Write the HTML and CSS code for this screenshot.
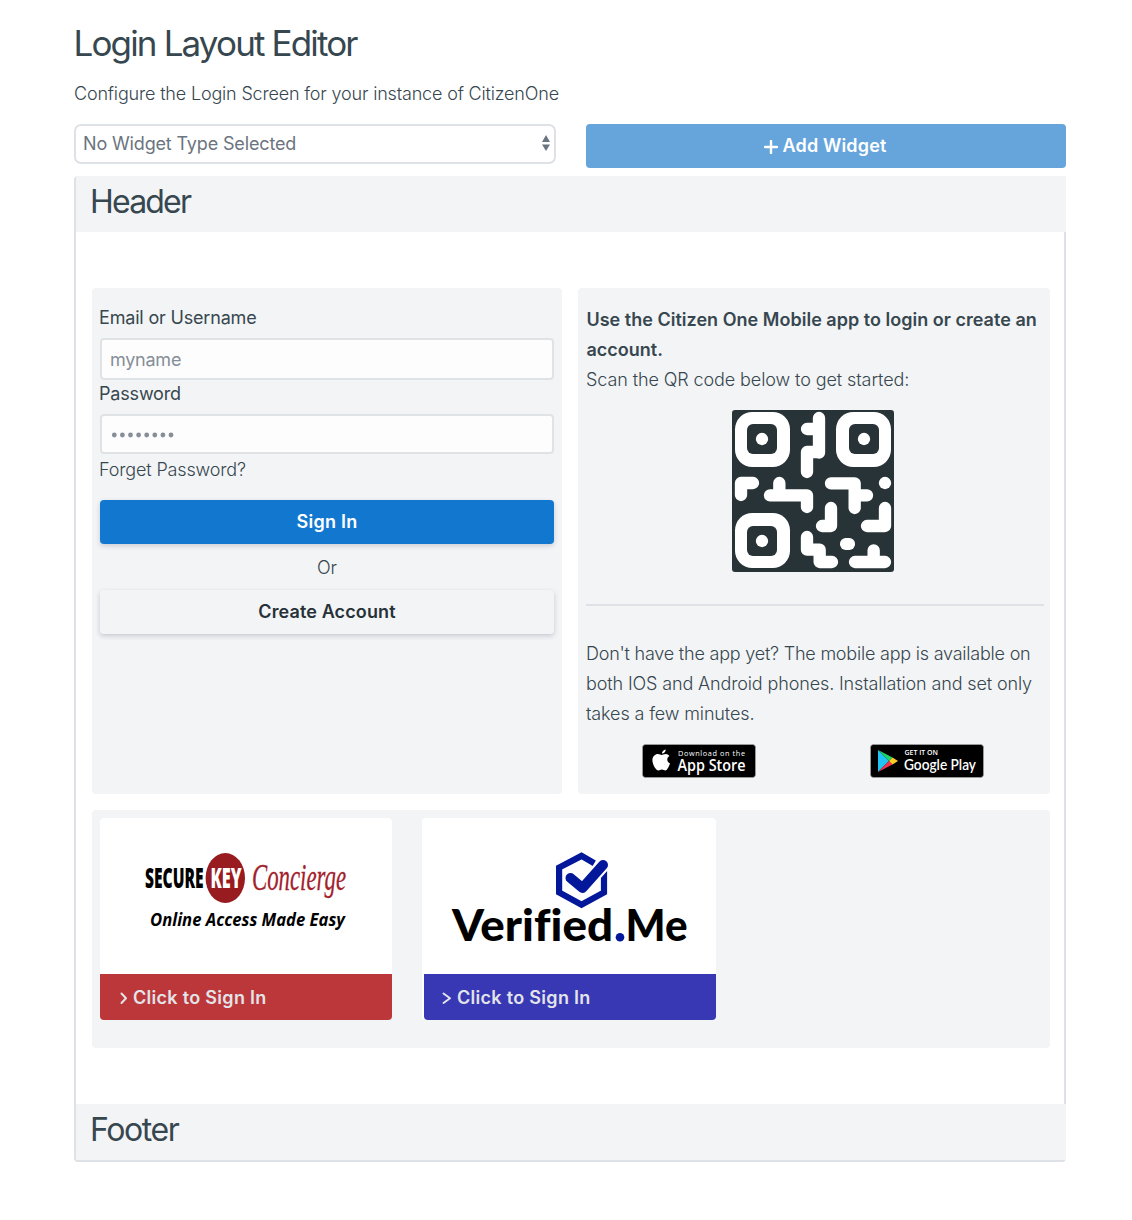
FILE: index.html
```html
<!DOCTYPE html>
<html lang="en">
<head>
<meta charset="utf-8">
<title>Login Layout Editor</title>
<link rel="stylesheet" href="styles.css">
</head>
<body>
<main class="page">
  <h1 class="title">Login Layout Editor</h1>
  <p class="intro">Configure the Login Screen for your instance of CitizenOne</p>
  <div class="toolbar">
    <div class="select"><span>No Widget Type Selected</span>
      <svg class="select-icon" viewBox="0 0 10 18" width="10" height="18"><path d="M5 1 9 8H1zM1 10.500h8L5 17z" fill="#6b7480"/></svg>
    </div>
    <button class="btn add"><svg viewBox="0 0 14 14" width="14" height="14"><path d="M7 1v12M1 7h12" stroke="#fff" stroke-width="2.400" stroke-linecap="round"/></svg><span>Add Widget</span></button>
  </div>
  <section class="editor">
    <header class="band"><h2 class="header-title">Header</h2></header>
    <div class="content">
      <form class="panel login">
        <label class="label">Email or Username</label>
        <div class="input"><span>myname</span></div>
        <label class="label">Password</label>
        <div class="input password"><svg viewBox="0 0 64 6" width="64" height="6"><g fill="#868e98"><circle cx="4.300" cy="3" r="2.400"/><circle cx="12.400" cy="3" r="2.400"/><circle cx="20.500" cy="3" r="2.400"/><circle cx="28.600" cy="3" r="2.400"/><circle cx="36.700" cy="3" r="2.400"/><circle cx="44.800" cy="3" r="2.400"/><circle cx="52.900" cy="3" r="2.400"/><circle cx="61" cy="3" r="2.400"/></g></svg></div>
        <a class="forgot">Forget Password?</a>
        <button class="btn primary" type="button">Sign In</button>
        <p class="or">Or</p>
        <button class="btn secondary" type="button">Create Account</button>
      </form>
      <div class="panel mobile">
        <p class="lead">Use the Citizen One Mobile app to login or create an<br>account.</p>
        <p class="scan">Scan the QR code below to get started:</p>
        <svg class="qr" viewBox="24 24 486 486" width="162" height="162">
          <rect x="24" y="24" width="486" height="486" rx="9" fill="#283337"/>
          <g fill="#fff"><rect x="33" y="30" width="165" height="165" rx="52"/><rect x="336" y="30" width="165" height="165" rx="52"/><rect x="33" y="333" width="165" height="165" rx="52"/></g>
          <g fill="#283337"><rect x="69" y="66" width="90" height="90" rx="18"/><rect x="375" y="66" width="90" height="90" rx="18"/><rect x="69" y="372" width="90" height="90" rx="18"/></g>
          <g fill="#fff"><circle cx="114" cy="111" r="18.500"/><circle cx="420" cy="111" r="18.500"/><circle cx="114" cy="417" r="18.500"/><circle cx="483" cy="243" r="18.500"/><rect x="348" y="408" width="45" height="36" rx="17"/></g>
          <path d="M285 48V152M249 81H285M285 150H249V210M51 279V243H87M166 243V280M138 280H249V315M321 244H392V318M392 280H429M321 318V372H294M483 318V372H429M249 405V443H287V480H324M393 480H483M449 445V480" fill="none" stroke="#fff" stroke-width="37" stroke-linecap="round" stroke-linejoin="round"/>
        </svg>
        <hr>
        <p class="availability"><span class="line-tight">Don't have the app yet? The mobile app is available on</span><br>both IOS and Android phones. Installation and set only<br>takes a few minutes.</p>
        <div class="stores">
          <svg viewBox="0 0 114 34" width="114" height="34">
            <rect x=".5" y=".5" width="113" height="33" rx="3" fill="#000" stroke="#a6a6a6" stroke-width=".7"/>
            <g transform="translate(-.5 .6)" fill="#fff"><path d="M24.200 4.800c.2 2-1.500 4.100-3.700 4.100-.3-2 1.600-3.900 3.700-4.100z"/><path d="M20.200 10.300c.9 0 2.200-1 4-1 1.500 0 2.900.8 3.700 2-3.200 1.900-2.600 6.200.6 7.500-.8 2.200-2.600 7-4.600 7-1.300 0-1.900-.9-3.500-.9s-2.200.9-3.500.9c-2.600 0-6-6-6-10.400 0-3.800 2.900-6.100 5.500-6.100 1.600 0 2.900 1 3.800 1z"/></g>
            <text class="store-small" x="36" y="11.500" textLength="67" lengthAdjust="spacing">Download on the</text>
            <text class="store-apple" x="35.500" y="27" textLength="68" lengthAdjust="spacingAndGlyphs">App Store</text>
          </svg>
          <svg viewBox="0 0 114 34" width="114" height="34">
            <rect x=".5" y=".5" width="113" height="33" rx="3" fill="#000" stroke="#a6a6a6" stroke-width=".7"/>
            <path d="M8 6v22l11-11z" fill="#20c4f4"/><path d="M8 6l11 11 3.500-3.500z" fill="#20d568"/><path d="M8 28l11-11 3.500 3.500z" fill="#f3324b"/><path d="M22.500 13.500 28 17l-5.500 3.500L19 17z" fill="#ffcc25"/>
            <text class="store-get" x="34.500" y="11" textLength="33.500" lengthAdjust="spacingAndGlyphs">GET IT ON</text>
            <text class="store-google" x="34" y="26" textLength="72" lengthAdjust="spacingAndGlyphs">Google Play</text>
          </svg>
        </div>
      </div>
      <div class="panel providers">
        <article class="provider">
          <svg viewBox="0 0 292 156" width="292" height="156">
            <ellipse cx="125.300" cy="60" rx="19.700" ry="25" fill="#981b20"/>
            <text class="sk-secure" x="45" y="69.500" textLength="58.500" lengthAdjust="spacingAndGlyphs">SECURE</text>
            <text class="sk-key" x="110.500" y="69.500" textLength="31" lengthAdjust="spacingAndGlyphs">KEY</text>
            <text class="sk-concierge" x="152" y="72" textLength="94" lengthAdjust="spacingAndGlyphs">Concierge</text>
            <text class="sk-tag" x="50" y="107.500" textLength="195" lengthAdjust="spacingAndGlyphs">Online Access Made Easy</text>
          </svg>
          <a class="signin red"><svg viewBox="0 0 10 14" width="10" height="14"><path d="M2.500 2.500 7 7.200 2.500 12" fill="none" stroke="#e2e4e9" stroke-width="2" stroke-linecap="round" stroke-linejoin="round"/></svg><span>Click to Sign In</span></a>
        </article>
        <article class="provider verified">
          <svg viewBox="0 0 294 156" width="294" height="156">
            <path d="M172.300 45.200 159.500 37.900 137.100 49.600V74.500L159.500 86.700 182 74.500V53" fill="none" stroke="#03179b" stroke-width="6.200"/>
            <path d="M148.500 60 160.500 70 181 47" fill="none" stroke="#fff" stroke-width="14" stroke-linecap="round" stroke-linejoin="round"/>
            <path d="M148.500 60 160.500 70 181 47" fill="none" stroke="#03179b" stroke-width="10" stroke-linecap="round" stroke-linejoin="round"/>
            <text class="vm" x="30" y="123" textLength="161" lengthAdjust="spacingAndGlyphs">Verified</text>
            <circle cx="198" cy="119.300" r="4.300" fill="#03179b"/>
            <text class="vm" x="203.500" y="123" textLength="62" lengthAdjust="spacingAndGlyphs">Me</text>
          </svg>
          <a class="signin blue"><svg viewBox="0 0 10 14" width="10" height="14"><path d="M1.500 2.500 8 7.200 1.500 12" fill="none" stroke="#e2e4e9" stroke-width="2" stroke-linecap="round" stroke-linejoin="round"/></svg><span>Click to Sign In</span></a>
        </article>
      </div>
    </div>
    <footer class="band"><h2 class="footer-title">Footer</h2></footer>
  </section>
</main>
</body>
</html>
```
FILE: styles.css
```css
* { box-sizing: border-box; }
body { margin: 0; background: #fff; color: #37474f; font: 300 18px/30px Inter, "Liberation Sans", sans-serif; }
h1, h2, p { margin: 0; }
svg { display: block; flex: none; }
.page { width: 992px; margin: 0 0 0 74px; padding-top: 20px; }
.title { margin-left: -.5px; font-size: 35px; line-height: 47px; font-weight: 420; letter-spacing: -1.85px; }
.intro { margin-top: 12px; letter-spacing: -.175px; }
.toolbar { display: flex; justify-content: space-between; align-items: flex-start; height: 52px; margin-top: 15px; }
.select { display: flex; align-items: center; justify-content: space-between; width: 482px; height: 40px; padding: 0 3px 0 7px; border: 2px solid #dee2e6; border-radius: 7px; color: #6b7480; font-weight: 400; letter-spacing: -.15px; }
.select-icon { margin-top: -2px; }
.btn { display: flex; align-items: center; justify-content: center; height: 44px; padding: 0; border: 0; border-radius: 4px; font: 600 18px/30px Inter, "Liberation Sans", sans-serif; letter-spacing: .25px; }
.add { width: 480px; padding-right: 2px; gap: 5px; background: #65a5dc; color: #fff; letter-spacing: .15px; }
.add svg { margin-top: 2px; }
.editor { border: 2px solid #dee2e6; border-top: 0; border-radius: 4px; }
.band { height: 56px; margin-right: -2px; padding: 5px 14px; background: #f3f4f6; }
.band h2 { font-size: 32px; line-height: 41px; font-weight: 420; }
.header-title { letter-spacing: -1.8px; }
.footer-title { letter-spacing: -1.4px; }
.content { display: grid; grid-template-columns: 470px 472px; grid-template-rows: 506px 238px; gap: 16px; padding: 56px 14px 56px 16px; }
.panel { border-radius: 4px; background: #f3f4f6; }
.login { display: flex; flex-direction: column; padding: 14px 8px; }
.label { height: 36px; margin-left: -1px; line-height: 32px; font-weight: 400; letter-spacing: -.18px; }
.input { display: flex; flex: none; align-items: center; height: 42px; margin-bottom: 4px; padding: 2px 8px 0; border: 2px solid #dfe3e6; border-radius: 4px; background: #fdfdfd; color: #868e98; font-weight: 400; letter-spacing: -.25px; }
.input.password { height: 40px; margin: 0; }
.login .label:nth-of-type(2) { margin-top: -6px; }
.forgot { margin: 1px 0 15px -1px; letter-spacing: -.15px; }
.primary { flex: none; background: #1278cf; color: #fff; box-shadow: 0 2px 5px rgba(40, 50, 80, .2); }
.or { height: 46px; line-height: 47px; text-align: center; }
.secondary { flex: none; background: #f3f4f6; color: #263238; box-shadow: 0 2px 5px rgba(40, 50, 80, .22); letter-spacing: .12px; }
.mobile { display: flex; flex-direction: column; padding: 17px 10px 16px 8px; white-space: nowrap; }
.lead { padding-left: .4px; font-weight: 600; letter-spacing: .02px; }
.scan { letter-spacing: -.1px; }
.qr { align-self: center; margin-top: 15px; }
hr { align-self: flex-start; width: 458px; height: 2px; margin: 32px 0 33px; border: 0; background: #dee2e6; }
.availability { letter-spacing: -.13px; }
.line-tight { letter-spacing: -.215px; }
.stores { display: flex; justify-content: space-between; margin-top: 15px; padding: 0 56px; }
.stores text { fill: #fff; }
.store-small { font: 500 7.3px "Open Sans", sans-serif; }
.store-apple { font: 600 16.5px "Open Sans", sans-serif; }
.store-get { font: 600 7px "Open Sans", sans-serif; }
.store-google { font: 600 15.5px Lato, sans-serif; }
.providers { grid-column: 1 / 3; display: flex; gap: 30px; padding: 8px; }
.provider { width: 292px; height: 202px; border-radius: 4px; background: #fff; }
.verified { width: 294px; }
.signin { display: flex; align-items: center; gap: 4px; height: 46px; padding: 2px 0 0 19px; border-radius: 0 0 4px 4px; color: #e2e4e9; font-weight: 600; letter-spacing: .3px; }
.red { background: #bc373a; }
.blue { margin-left: 2px; padding-left: 18px; gap: 5px; background: #3838b4; }
.sk-secure, .sk-key { font: 800 27.5px "Open Sans", sans-serif; }
.sk-key { fill: #fff; }
.sk-concierge { font: italic 400 38px "Liberation Serif", serif; fill: #a3212b; stroke: #a3212b; stroke-width: .3px; }
.sk-tag { font: italic 700 18.5px "Open Sans", sans-serif; }
.vm { font: 900 43px Lato, sans-serif; font-variant-ligatures: none; }
```
